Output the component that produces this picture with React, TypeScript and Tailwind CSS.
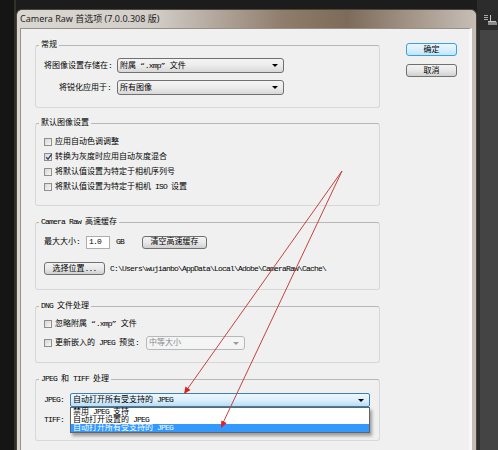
import type { ReactNode } from 'react';

// ASCII runs are squeezed so Liberation Mono comes out half the width of a CJK glyph
function T({ s }: { s: string }) {
  const parts = s.split(/([\x20-\x7e]+)/);
  return (
    <>
      {parts.map((p, i) =>
        !p ? null : /^[\x20-\x7e]+$/.test(p) ? (
          <span key={i} className="tracking-[-0.8px]">
            {p}
          </span>
        ) : (
          <span key={i}>{p}</span>
        )
      )}
    </>
  );
}

function Group({ title, className, children }: { title: string; className: string; children: ReactNode }) {
  return (
    <fieldset className={`rounded-[3px] border border-[#d8d8d8] border-t-[#b7b7b7] ${className}`}>
      <legend className="ml-[3px] px-[2px] leading-[12px]">
        <T s={title} />
      </legend>
      {children}
    </fieldset>
  );
}

function Arrow({ color }: { color: string }) {
  return <span className={`h-0 w-0 border-x-[3px] border-t-[3px] border-x-transparent ${color}`} />;
}

function Combo({ value, className }: { value: string; className: string }) {
  return (
    <div
      className={`flex h-[15px] items-center justify-between rounded-[3px] border border-[#707070] bg-gradient-to-b from-[#f4f4f4] via-[#ececec] to-[#d8d8d8] pl-[2px] pr-[5px] ${className}`}
    >
      <span className="whitespace-nowrap">
        <T s={value} />
      </span>
      <Arrow color="border-t-black" />
    </div>
  );
}

function Check({ checked }: { checked?: boolean }) {
  return (
    <span className="relative flex h-[8px] w-[8px] shrink-0 items-center justify-center border border-[#8e8e8e] bg-gradient-to-br from-[#d6d6d6] to-[#f7f7f7]">
      {checked && (
        <svg width="8" height="8" viewBox="0 0 8 8" className="absolute -top-[1px] left-0">
          <path d="M1.2 4.2 L3 6.2 L6.8 1.2" fill="none" stroke="#34456a" strokeWidth="1.4" />
        </svg>
      )}
    </span>
  );
}

function CheckRow({ label, checked }: { label: string; checked?: boolean }) {
  return (
    <div className="flex h-[15px] items-center gap-[3px]">
      <Check checked={checked} />
      <span className="whitespace-nowrap">
        <T s={label} />
      </span>
    </div>
  );
}

function Btn({ label, className }: { label: string; className: string }) {
  return (
    <div
      className={`flex items-center justify-center rounded-[3px] border border-[#707070] bg-gradient-to-b from-[#f3f3f3] via-[#e8e8e8] to-[#d0d0d0] whitespace-nowrap ${className}`}
    >
      <T s={label} />
    </div>
  );
}

export default function App() {
  return (
    <div className="relative flex h-[450px] w-[498px] overflow-hidden bg-[#1c1c1c] font-['Liberation_Mono','Noto_Sans_CJK_SC',monospace] text-[8px] leading-[12px] text-black">
      <div className="w-[16px] shrink-0 border-r-[2px] border-r-[#34302c] bg-[#151515]" />

      {/* dialog window */}
      <div className="mt-[9px] flex w-[461px] shrink-0 flex-col rounded-t-[6px] border border-b-0 border-[#4c433b] bg-[linear-gradient(90deg,#dad7d3_0%,#d2cdc8_30%,#8f7d6b_58%,#7d6b5a_72%,#a89b8e_88%,#c6beb6_100%)]">
        <div className="flex h-[18px] shrink-0 items-center pl-[3px] font-['Noto_Sans','Noto_Sans_CJK_SC',sans-serif] text-[9px] leading-[18px] text-[#1e1e1e]">
          Camera Raw 首选项 (7.0.0.308 版)
        </div>

        <div className="ml-[3px] mr-[4px] flex flex-1 border border-b-0 border-r-[3px] border-[#9a9087] border-r-[#f8f8f8] bg-[#f0f0f0] pl-[14px] pt-[10px]">
          <div className="flex w-[345px] shrink-0 flex-col">
            <Group title="常规" className="">
              <div className="flex flex-col gap-[7px] px-[8px] pb-[12px] pt-[7px]">
                <div className="flex h-[15px] items-center">
                  <span className="w-[73px] whitespace-nowrap pr-[6px] text-right">
                    <T s="将图像设置存储在:" />
                  </span>
                  <Combo value="附属 “.xmp” 文件" className="w-[167px]" />
                </div>
                <div className="flex h-[15px] items-center">
                  <span className="w-[73px] whitespace-nowrap pr-[6px] text-right">
                    <T s="将锐化应用于:" />
                  </span>
                  <Combo value="所有图像" className="w-[167px]" />
                </div>
              </div>
            </Group>

            <Group title="默认图像设置" className="mt-[9px]">
              <div className="flex flex-col px-[8px] pb-[11px] pt-[5px]">
                <CheckRow label="应用自动色调调整" />
                <CheckRow label="转换为灰度时应用自动灰度混合" checked />
                <CheckRow label="将默认值设置为特定于相机序列号" />
                <CheckRow label="将默认值设置为特定于相机 ISO 设置" />
              </div>
            </Group>

            <Group title="Camera Raw 高速缓存" className="mt-[10px]">
              <div className="flex flex-col px-[8px] pb-[14px] pt-[7px]">
                <div className="flex h-[14px] items-center">
                  <span className="whitespace-nowrap">
                    <T s="最大大小:" />
                  </span>
                  <div className="ml-[6px] flex h-[13px] w-[24px] items-center border border-[#abadb3] bg-white pl-[2px]">
                    <T s="1.0" />
                  </div>
                  <span className="ml-[6px]">
                    <T s="GB" />
                  </span>
                  <Btn label="清空高速缓存" className="ml-[18px] h-[13px] w-[65px]" />
                </div>
                <div className="mt-[13px] flex h-[13px] items-center">
                  <Btn label="选择位置..." className="h-[13px] w-[61px]" />
                  <span className="ml-[5px] whitespace-nowrap">
                    <T s="C:\Users\wujianbo\AppData\Local\Adobe\CameraRaw\Cache\" />
                  </span>
                </div>
              </div>
            </Group>

            <Group title="DNG 文件处理" className="mt-[10px]">
              <div className="flex flex-col px-[8px] pb-[12px] pt-[4px]">
                <CheckRow label="忽略附属 “.xmp” 文件" />
                <div className="mt-[5px] flex h-[14px] items-center">
                  <Check />
                  <span className="ml-[3px] whitespace-nowrap">
                    <T s="更新嵌入的 JPEG 预览:" />
                  </span>
                  <div className="ml-[7px] flex h-[14px] w-[99px] items-center justify-between rounded-[3px] border border-[#b5b9bc] bg-[#f4f4f4] pl-[2px] pr-[5px] text-[#8a8a8a]">
                    <span>中等大小</span>
                    <Arrow color="border-t-[#9a9a9a]" />
                  </div>
                </div>
              </div>
            </Group>

            <Group title="JPEG 和 TIFF 处理" className="mt-[10px]">
              <div className="flex flex-col px-[8px] pb-[13px] pt-[8px]">
                <div className="flex h-[14px] items-center">
                  <span className="w-[26px]">
                    <T s="JPEG:" />
                  </span>
                  <div className="relative w-[300px]">
                    <div className="flex h-[14px] items-center justify-between rounded-[2px] border border-[#3c7fb1] bg-gradient-to-b from-[#eef7fd] via-[#dcefFb] to-[#b9def5] pl-[2px] pr-[5px]">
                      <span className="whitespace-nowrap">
                        <T s="自动打开所有受支持的 JPEG" />
                      </span>
                      <Arrow color="border-t-black" />
                    </div>
                    {/* open dropdown list */}
                    <div className="absolute left-0 top-full z-10 w-[300px] border border-[#646464] bg-white shadow-[2px_3px_3px_rgba(0,0,0,0.35)]">
                      <div className="h-[8px] whitespace-nowrap px-[2px] leading-[8px]">
                        <T s="禁用 JPEG 支持" />
                      </div>
                      <div className="h-[8px] whitespace-nowrap px-[2px] leading-[8px]">
                        <T s="自动打开设置的 JPEG" />
                      </div>
                      <div className="h-[8px] whitespace-nowrap bg-[#3399ff] px-[2px] leading-[8px] text-white">
                        <T s="自动打开所有受支持的 JPEG" />
                      </div>
                    </div>
                  </div>
                </div>
                <div className="mt-[6px] flex h-[14px] items-center">
                  <span className="w-[26px]">
                    <T s="TIFF:" />
                  </span>
                  <Combo value="自动打开设置的 TIFF" className="h-[14px] w-[300px]" />
                </div>
              </div>
            </Group>
          </div>

          <div className="ml-[26px] mt-[4px] flex w-[51px] flex-col gap-[8px]">
            <div className="flex h-[13px] items-center justify-center rounded-[3px] border border-[#3c9fe0] bg-gradient-to-b from-[#eaf6fd] via-[#d9f0fc] to-[#bee6fd]">
              确定
            </div>
            <Btn label="取消" className="h-[13px]" />
          </div>
        </div>
      </div>

      {/* backdrop to the right of the dialog */}
      <div className="flex flex-1 flex-col">
        <div className="flex h-[30px] justify-end bg-[#2c2c2c] pr-[1px] pt-[14px]">
          <svg width="14" height="12" viewBox="0 0 14 12">
            <path d="M1 1.5h4M1 3.5h4M1 5.5h4" stroke="#a8a8a8" strokeWidth="1" />
            <path d="M7.5 1v6M5 7.5h8" stroke="#c8c8c8" strokeWidth="1" />
            <rect x="5" y="8" width="9" height="3" fill="#8a8a8a" />
          </svg>
        </div>
        <div className="flex-1 border-l-[3px] border-l-[#2e2e2e] bg-[#444444]" />
      </div>

      {/* red annotation arrows */}
      <svg className="pointer-events-none absolute left-0 top-0 z-20" width="498" height="450" viewBox="0 0 498 450">
        <path d="M342 171 L186 391" stroke="#c4433f" strokeWidth="1" fill="none" />
        <path d="M342 171 L222 425" stroke="#c4433f" strokeWidth="1" fill="none" />
        <polygon points="184,394 190.5,390 185.5,386.4" fill="#e01e1e" />
        <polygon points="221,428 226.7,423 221.3,420.4" fill="#e01e1e" />
      </svg>
    </div>
  );
}
